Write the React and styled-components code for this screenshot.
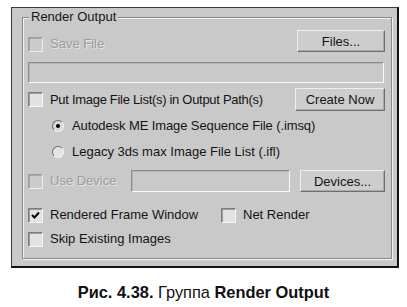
import React from "react";
import styled, { createGlobalStyle, css } from "styled-components";

const Global = createGlobalStyle`
  html, body { margin: 0; padding: 0; background: #ffffff; }
  body { font-family: "Liberation Sans", Arial, sans-serif; }
`;

const Page = styled.div`
  width: 407px;
  height: 307px;
  padding: 7px 0 0 11px;
  box-sizing: border-box;
`;

const Panel = styled.div`
  width: 388px;
  height: 261px;
  box-sizing: border-box;
  background: #c9c9c9;
  border-style: solid;
  border-width: 1px 2px 2px 1px;
  border-color: #3a3a3a #111 #111 #3a3a3a;
  padding: 2px 5px 0 10px;
`;

const Group = styled.fieldset`
  margin: 0;
  padding: 6px 6px 10px 5px;
  border: 1px solid #8a8a8a;
  box-shadow: 1px 1px 0 #f2f2f2, inset 1px 1px 0 #f2f2f2;
  min-width: 0;
  display: flex;
  flex-direction: column;
`;

const Legend = styled.legend`
  padding: 0 2px;
  margin-left: 1px;
  font-size: 13px;
  line-height: 14px;
  color: #161616;
  background: #c9c9c9;
`;

const Row = styled.div`
  display: flex;
  align-items: ${(p) => p.$align || "center"};
  height: ${(p) => p.$h}px;
  margin-top: ${(p) => p.$mt || 0}px;
  padding-left: ${(p) => p.$indent || 0}px;
`;

const Cell = styled.div`
  display: flex;
  align-items: center;
  width: ${(p) => (p.$w ? `${p.$w}px` : "auto")};
  flex: ${(p) => (p.$w ? "none" : "1")};
`;

const Label = styled.span`
  font-size: 13px;
  line-height: 16px;
  white-space: nowrap;
  margin-left: ${(p) => p.$gap || 7}px;
  letter-spacing: ${(p) => p.$ls || 0}px;
  color: ${(p) => (p.$disabled ? "#9c9c9c" : "#141414")};
  ${(p) =>
    p.$disabled &&
    css`
      text-shadow: 1px 1px 0 #e6e6e6;
    `}
`;

const Box = styled.span`
  width: 15px;
  height: 15px;
  box-sizing: border-box;
  flex: none;
  display: inline-flex;
  align-items: center;
  justify-content: center;
  border-style: solid;
  border-width: 1px;
  border-color: #7e7e7e #f6f6f6 #f6f6f6 #7e7e7e;
  box-shadow: inset 1px 1px 0 ${(p) => (p.$disabled ? "#a8a8a8" : "#9a9a9a")};
  background: ${(p) => (p.$disabled ? "#cbcbcb" : "#e2e2e2")};
  ${(p) =>
    p.$disabled &&
    css`
      border-color: #9e9e9e #ececec #ececec #9e9e9e;
    `}
`;

const Radio = styled.span`
  width: 12px;
  height: 12px;
  box-sizing: border-box;
  border-radius: 50%;
  flex: none;
  display: inline-flex;
  align-items: center;
  justify-content: center;
  border: 1px solid;
  border-color: #6e6e6e #f4f4f4 #f4f4f4 #6e6e6e;
  background: ${(p) => (p.$on ? "#d8d8d8" : "#e4e4e4")};
  &::after {
    content: "";
    width: 4px;
    height: 4px;
    border-radius: 50%;
    background: ${(p) => (p.$on ? "#000" : "transparent")};
  }
`;

const Button = styled.button`
  margin-left: auto;
  width: ${(p) => p.$w}px;
  height: ${(p) => p.$h || 22}px;
  box-sizing: border-box;
  padding: 0;
  font-family: "Liberation Sans", Arial, sans-serif;
  font-size: 13px;
  color: #141414;
  background: #cdcdcd;
  border: 1px solid;
  border-color: #efefef #707070 #707070 #efefef;
  box-shadow: inset -1px -1px 0 #a9a9a9;
  flex: none;
`;

const Field = styled.div`
  box-sizing: border-box;
  height: ${(p) => p.$h}px;
  width: ${(p) => (p.$w ? `${p.$w}px` : "auto")};
  margin-right: ${(p) => p.$mr || 0}px;
  margin-top: ${(p) => p.$mt || 0}px;
  background: #c9c9c9;
  border: 1px solid;
  border-color: #8c8c8c #fafafa #fafafa #8c8c8c;
  box-shadow: inset 1px 1px 0 #b4b4b4;
  flex: none;
`;

const Caption = styled.div`
  margin: 15px 0 0 -11px;
  width: 407px;
  text-align: center;
  font-size: 16.4px;
  line-height: 18px;
  color: #111;
  b { font-weight: bold; }
`;

const Check = () => (
  <svg width="9" height="9" viewBox="0 0 9 9">
    <path d="M1 4 L3.5 6.5 L8 1.5" fill="none" stroke="#000" strokeWidth="2" />
  </svg>
);

const CheckItem = ({ label, checked, disabled, ls }) => (
  <>
    <Box $disabled={disabled}>{checked && <Check />}</Box>
    <Label $disabled={disabled} $ls={ls}>{label}</Label>
  </>
);

export default function App() {
  return (
    <Page>
      <Global />
      <Panel>
        <Group>
          <Legend>Render Output</Legend>
          <Row $h={22} $align="flex-end">
            <Cell>
              <CheckItem label="Save File" disabled />
            </Cell>
            <Button $w={88}>Files...</Button>
          </Row>
          <Field $h={21} $mt={10} $mr={1} />
          <Row $h={23} $mt={5}>
            <Cell>
              <CheckItem label="Put Image File List(s) in Output Path(s)" ls={-0.3} />
            </Cell>
            <Button $w={90} $h={23}>Create Now</Button>
          </Row>
          <Row $h={18} $mt={6} $indent={24}>
            <Radio $on />
            <Label $gap={8} $ls={-0.1}>Autodesk ME Image Sequence File (.imsq)</Label>
          </Row>
          <Row $h={18} $mt={8} $indent={24}>
            <Radio />
            <Label $gap={8}>Legacy 3ds max Image File List (.ifl)</Label>
          </Row>
          <Row $h={22} $mt={9}>
            <Cell $w={103}>
              <CheckItem label="Use Device" disabled />
            </Cell>
            <Field $h={22} $w={159} />
            <Button $w={85}>Devices...</Button>
          </Row>
          <Row $h={18} $mt={14}>
            <Cell $w={193}>
              <CheckItem label="Rendered Frame Window" checked />
            </Cell>
            <Cell>
              <CheckItem label="Net Render" />
            </Cell>
          </Row>
          <Row $h={18} $mt={6}>
            <Cell>
              <CheckItem label="Skip Existing Images" />
            </Cell>
          </Row>
        </Group>
      </Panel>
      <Caption>
        <b>Рис. 4.38.</b> Группа <b>Render Output</b>
      </Caption>
    </Page>
  );
}
